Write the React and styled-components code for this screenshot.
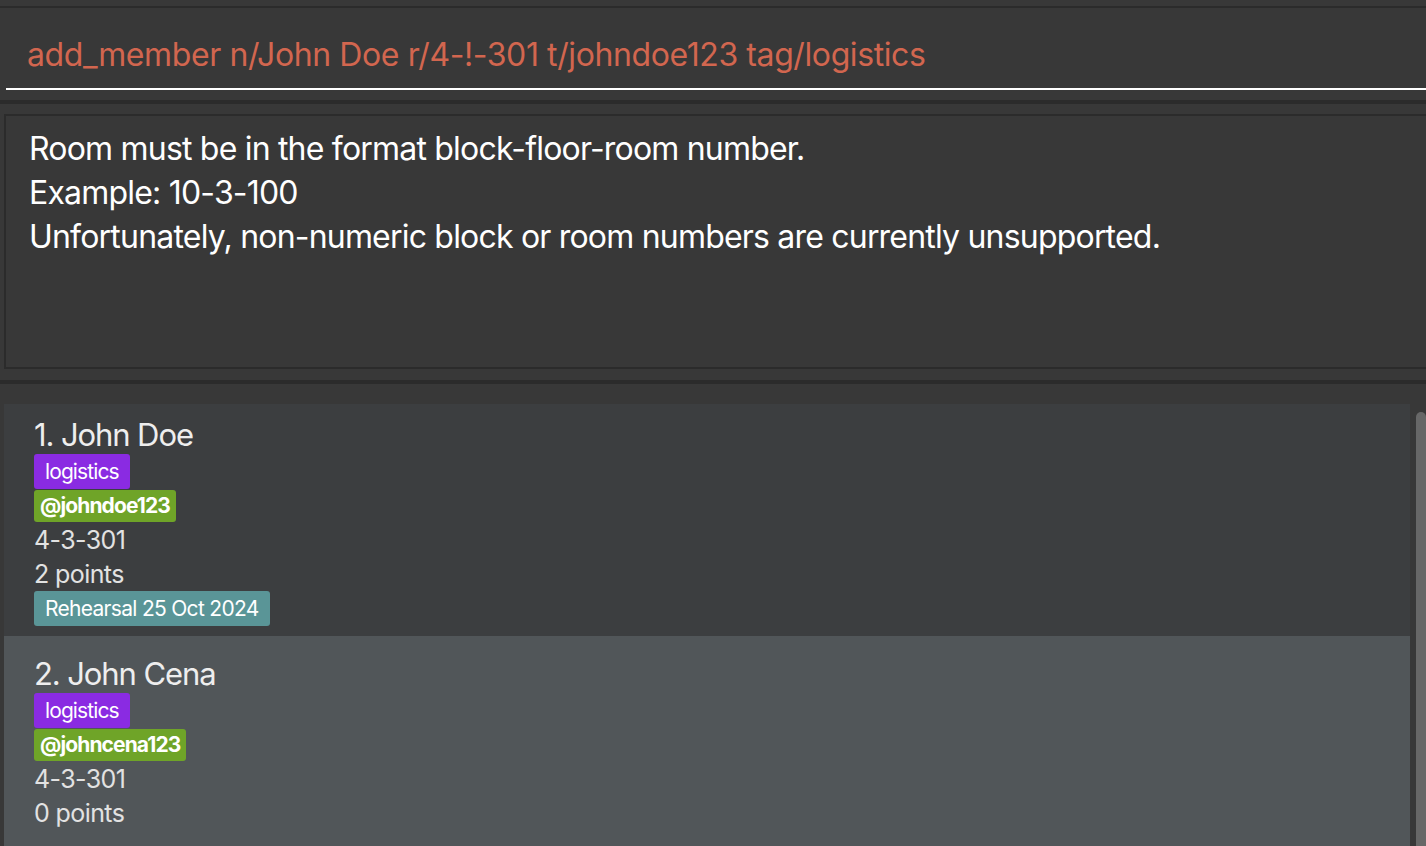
import styled, {createGlobalStyle} from "styled-components";

const GlobalStyle = createGlobalStyle`
	html, body {
		margin: 0;
		padding: 0;
		background: #383838;
		overflow: hidden;
		font-family: "Inter", "Noto Sans", sans-serif;
	}
`;

const Window = styled.div`
	width: 1426px;
	height: 846px;
	overflow: hidden;
	background: #383838;
	display: flex;
	flex-direction: column;
	padding-top: 6px;
	box-sizing: border-box;
`;

const Divider = styled.div`
	flex: none;
	height: ${(p) => p.$size || 2}px;
	background: #2b2b2b;
	margin-bottom: ${(p) => p.$after || 0}px;
`;

const CommandBox = styled.div`
	height: 80px;
	box-sizing: border-box;
	display: flex;
	align-items: center;
	padding: 12px 0 0 27px;
	font-size: 32px;
	letter-spacing: -0.4px;
	color: #d2664f;
	white-space: nowrap;
`;

const Underline = styled.div`
	height: 2px;
	margin-left: 6px;
	background: #ffffff;
	margin-bottom: 10px;
`;

const ResultBox = styled.div`
	flex: none;
	height: 255px;
	margin-left: 4px;
	margin-right: -20px;
	border: 2px solid #2b2b2b;
	box-sizing: border-box;
	padding: 11px 0 0 23px;
	color: #ffffff;
	font-size: 32px;
	line-height: 44px;
	letter-spacing: -0.8px;
	margin-bottom: 11px;
`;

const ListArea = styled.div`
	flex: 1;
	display: flex;
	gap: 6px;
	margin-top: 20px;
	min-height: 0;
`;

const ListView = styled.div`
	width: 1406px;
	margin-left: 4px;
	overflow: hidden;
	display: flex;
	flex-direction: column;
`;

const ListContent = styled.div`
	margin-top: -7px;
	flex: 1 0 auto;
	display: flex;
	flex-direction: column;
`;

const Cell = styled.div`
	background: ${(p) => (p.$odd ? "#515659" : "#3c3e40")};
	padding: 20px 0 9px 30px;
	display: flex;
	flex-direction: column;
	align-items: flex-start;

	&:last-child {
		flex-grow: 1;
	}
`;

const Name = styled.div`
	font-size: 31px;
	line-height: 36px;
	color: #eeeeee;
	letter-spacing: -1.1px;
	margin-bottom: 1px;
`;

const Tag = styled.span`
	display: inline-block;
	background: ${(p) => p.$bg};
	color: #ffffff;
	font-size: 21px;
	font-weight: ${(p) => (p.$bold ? 700 : 400)};
	height: ${(p) => p.$h}px;
	line-height: ${(p) => p.$h}px;
	padding: 0 ${(p) => p.$pad}px;
	border-radius: 3px;
	margin-bottom: 1px;
	letter-spacing: ${(p) => p.$ls}px;
`;

const Detail = styled.div`
	font-size: 25px;
	line-height: 34px;
	color: #e2e2e2;
	letter-spacing: -0.6px;
`;

const ScrollBar = styled.div`
	width: 10px;
	margin-top: 8px;
	background: #676767;
	border-radius: 6px 6px 0 0;
	flex: none;
`;

const members = [
	{name: "John Doe", tag: "logistics", tele: "johndoe123", room: "4-3-301", points: 2, events: ["Rehearsal 25 Oct 2024"]},
	{name: "John Cena", tag: "logistics", tele: "johncena123", room: "4-3-301", points: 0, events: []},
];

function MemberCard({member, index}) {
	return (
		<Cell $odd={index % 2 === 1}>
			<Name>
				{index + 1}. {member.name}
			</Name>
			<Tag $bg="#8a2be2" $h={35} $pad={11} $ls={-0.9}>
				{member.tag}
			</Tag>
			<Tag $bg="#6fa428" $h={32} $pad={6} $bold $ls={-0.9}>
				@{member.tele}
			</Tag>
			<Detail>{member.room}</Detail>
			<Detail>{member.points} points</Detail>
			{member.events.map((ev) => (
				<Tag key={ev} $bg="#5a9597" $h={35} $pad={11} $ls={-0.7}>
					{ev}
				</Tag>
			))}
		</Cell>
	);
}

export default function App() {
	return (
		<Window>
			<GlobalStyle />
			<Divider />
			<CommandBox>add_member n/John Doe r/4-!-301 t/johndoe123 tag/logistics</CommandBox>
			<Underline />
			<Divider $size={4} $after={10} />
			<ResultBox>
				<div>Room must be in the format block-floor-room number.</div>
				<div>Example: 10-3-100</div>
				<div>Unfortunately, non-numeric block or room numbers are currently unsupported.</div>
			</ResultBox>
			<Divider $size={4} />
			<ListArea>
				<ListView>
					<ListContent>
						{members.map((m, i) => (
							<MemberCard key={m.tele} member={m} index={i} />
						))}
					</ListContent>
				</ListView>
				<ScrollBar />
			</ListArea>
		</Window>
	);
}
